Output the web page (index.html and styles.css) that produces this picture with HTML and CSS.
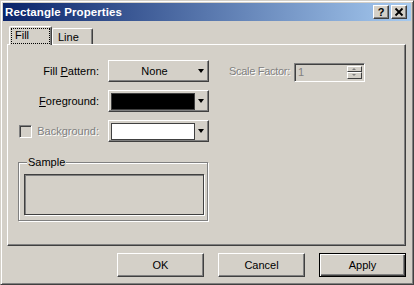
FILE: index.html
```html
<!DOCTYPE html>
<html lang="en">
<head>
    <meta charset="UTF-8">
    <meta name="viewport" content="width=device-width, initial-scale=1.0">
    <title>Rectangle Properties</title>
    <link rel="stylesheet" href="styles.css">
</head>
<body>
    <div class="window">
        <div class="titlebar">
            <span class="title">Rectangle Properties</span>
            <div class="title-buttons">
                <button class="title-btn help">?</button>
                <button class="title-btn">
                    <svg width="16" height="14" viewBox="0 0 16 14">
                        <path d="M4.5 3.5 L11.5 10.5 M11.5 3.5 L4.5 10.5" stroke="#000" stroke-width="1.8" fill="none"/>
                    </svg>
                </button>
            </div>
        </div>

        <div class="content">
            <div class="tabs">
                <div class="tab active"><span class="focus">Fill</span></div>
                <div class="tab">Line</div>
            </div>

            <div class="panel">
                <div class="row">
                    <label class="label">Fill <u>P</u>attern:</label>
                    <div class="combo">
                        <span class="combo-text">None</span>
                        <span class="arrow"></span>
                    </div>
                    <label class="label-scale disabled">Scale Factor:</label>
                    <div class="spin">
                        <span class="spin-value">1</span>
                        <div class="spin-buttons">
                            <span class="spin-btn"><span class="mini up"></span></span>
                            <span class="spin-btn"><span class="mini down"></span></span>
                        </div>
                    </div>
                </div>

                <div class="row">
                    <label class="label"><u>F</u>oreground:</label>
                    <div class="combo">
                        <span class="swatch black"></span>
                        <span class="arrow"></span>
                    </div>
                </div>

                <div class="row">
                    <div class="label check-label">
                        <span class="checkbox"></span>
                        <span class="disabled">Background:</span>
                    </div>
                    <div class="combo">
                        <span class="swatch white"></span>
                        <span class="arrow"></span>
                    </div>
                </div>

                <div class="group">
                    <span class="legend">Sample</span>
                    <div class="sample"></div>
                </div>
            </div>

            <div class="actions">
                <button class="button">OK</button>
                <button class="button">Cancel</button>
                <button class="button default">Apply</button>
            </div>
        </div>
    </div>
</body>
</html>
```

FILE: styles.css
```css
body {
    margin: 0;
    background-color: #d4d0c8;
    font-family: "Liberation Sans", Arial, sans-serif;
    font-size: 11px;
    color: #000;
}
.window {
    width: 414px;
    height: 285px;
    box-sizing: border-box;
    padding: 2px;
    border: 1px solid;
    border-color: #d4d0c8 #404040 #404040 #d4d0c8;
    box-shadow: inset 1px 1px 0 #fff, inset -1px -1px 0 #808080;
    background-color: #d4d0c8;
}
.titlebar {
    height: 18px;
    display: flex;
    align-items: center;
    justify-content: space-between;
    background: linear-gradient(to right, #0a246a, #a6caf0);
    padding: 0 4px 0 2px;
}
.title {
    color: #fff;
    font-weight: bold;
    font-size: 11.5px;
    letter-spacing: 0.1px;
}
.title-buttons {
    display: flex;
    gap: 2px;
}
.title-btn {
    width: 16px;
    height: 14px;
    padding: 0;
    margin: 0;
    background-color: #d4d0c8;
    border: 1px solid;
    border-color: #fff #404040 #404040 #fff;
    box-shadow: inset -1px -1px 0 #808080;
    font-family: "Liberation Sans", Arial, sans-serif;
    font-weight: bold;
    font-size: 11px;
    line-height: 12px;
    display: flex;
    align-items: center;
    justify-content: center;
}
.title-btn svg {
    display: block;
    margin: -1px;
}
.content {
    padding: 0 5px 0 4px;
}
.tabs {
    margin-top: 5px;
    height: 18px;
    display: flex;
    align-items: flex-end;
    padding-left: 2px;
}
.tab {
    height: 16px;
    box-sizing: border-box;
    width: 41px;
    padding: 2px 0 0 5px;
    border: 1px solid;
    border-bottom: none;
    border-color: #fff #404040 #404040 #fff;
    border-radius: 2px 2px 0 0;
    box-shadow: inset -1px 0 0 #808080;
}
.tab.active {
    position: relative;
    z-index: 1;
    width: 43px;
    height: 19px;
    margin-bottom: -1px;
    padding: 2px 2px 0 2px;
    background-color: #d4d0c8;
}
.focus {
    display: block;
    height: 14px;
    padding-left: 3px;
    outline: 1px dotted #000;
    line-height: 12px;
}
.panel {
    height: 202px;
    box-sizing: border-box;
    padding: 15px 0 0 1px;
    border: 1px solid;
    border-color: #fff #404040 #404040 #fff;
    box-shadow: inset -1px -1px 0 #808080;
}
.row {
    display: flex;
    align-items: center;
    height: 22px;
    margin-bottom: 8px;
}
.label {
    width: 90px;
    text-align: right;
    margin-right: 9px;
}
.check-label {
    display: flex;
    align-items: center;
    justify-content: flex-end;
    gap: 5px;
}
.checkbox {
    width: 13px;
    height: 13px;
    box-sizing: border-box;
    border: 1px solid;
    border-color: #808080 #fff #fff #808080;
    box-shadow: inset 1px 1px 0 #404040, inset -1px -1px 0 #d4d0c8;
}
.disabled {
    color: #808080;
    text-shadow: 1px 1px 0 #fff;
}
.combo {
    width: 101px;
    height: 22px;
    box-sizing: border-box;
    display: flex;
    align-items: center;
    padding: 2px 3px 2px 2px;
    border: 1px solid;
    border-color: #fff #404040 #404040 #fff;
    box-shadow: inset -1px -1px 0 #808080;
}
.combo-text {
    flex: 1;
    text-align: center;
}
.swatch {
    flex: 1;
    height: 15px;
    margin-right: 3px;
    border: 1px solid #404040;
}
.swatch.black {
    background-color: #000;
}
.swatch.white {
    background-color: #fff;
}
.arrow {
    width: 0;
    height: 0;
    border-left: 3.5px solid transparent;
    border-right: 3.5px solid transparent;
    border-top: 4px solid #000;
    margin-right: 1px;
}
.label-scale {
    margin-left: 20px;
    margin-right: 4px;
    letter-spacing: -0.3px;
    white-space: nowrap;
}
.spin {
    width: 71px;
    height: 19px;
    box-sizing: border-box;
    display: flex;
    align-items: stretch;
    padding: 2px;
    border: 1px solid;
    border-color: #808080 #fff #fff #808080;
    box-shadow: inset 1px 1px 0 #404040;
    margin-top: 2px;
}
.spin-value {
    flex: 1;
    color: #808080;
    padding-left: 1px;
    line-height: 13px;
}
.spin-buttons {
    width: 15px;
    display: flex;
    flex-direction: column;
}
.spin-btn {
    flex: 1;
    box-sizing: border-box;
    border: 1px solid;
    border-color: #fff #404040 #404040 #fff;
    display: flex;
    align-items: center;
    justify-content: center;
}
.mini {
    width: 0;
    height: 0;
    border-left: 2.5px solid transparent;
    border-right: 2.5px solid transparent;
}
.mini.up {
    border-bottom: 2px solid #808080;
}
.mini.down {
    border-top: 2px solid #808080;
}
.group {
    width: 190px;
    height: 59px;
    box-sizing: border-box;
    margin: 20px 0 0 9px;
    padding: 0 3px 0 5px;
    border: 1px solid #808080;
    box-shadow: 1px 1px 0 #fff, inset 1px 1px 0 #fff;
}
.legend {
    display: block;
    width: fit-content;
    margin: -7px 0 0 3px;
    padding: 0 1px;
    background-color: #d4d0c8;
    line-height: 13px;
}
.sample {
    height: 41px;
    box-sizing: border-box;
    margin-top: 5px;
    border: 1px solid #404040;
    box-shadow: inset 1px 1px 0 #808080, 1px 1px 0 #fff;
}
.actions {
    margin-top: 7px;
    display: flex;
    justify-content: flex-end;
    gap: 14px;
}
.button {
    width: 87px;
    height: 24px;
    padding: 0;
    background-color: #d4d0c8;
    border: 1px solid;
    border-color: #fff #404040 #404040 #fff;
    box-shadow: inset -1px -1px 0 #808080;
    font-family: "Liberation Sans", Arial, sans-serif;
    font-size: 11px;
    color: #000;
}
.button.default {
    border: 1px solid #000;
    box-shadow: inset 1px 1px 0 #fff, inset -1px -1px 0 #404040, inset -2px -2px 0 #808080;
}
```
